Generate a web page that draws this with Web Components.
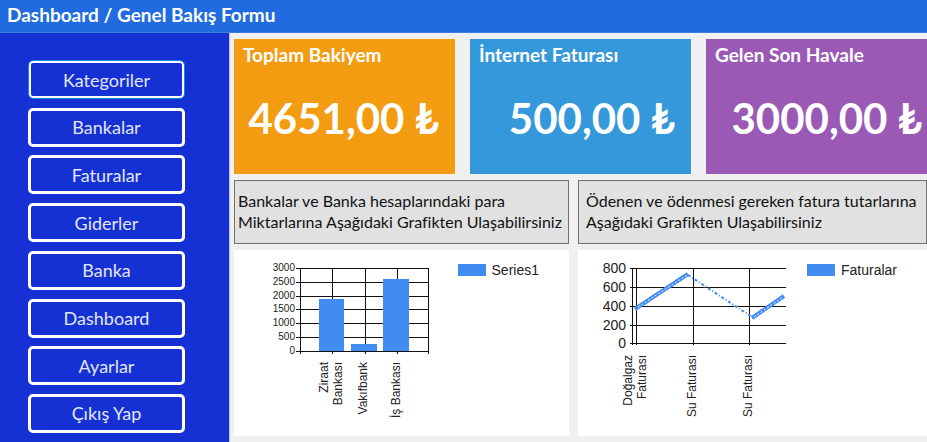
<!DOCTYPE html>
<html lang="tr">
<head>
<meta charset="utf-8">
<title>Dashboard / Genel Bakış Formu</title>
<style>
html, body { margin: 0; }
body { font-family: Lato, "Liberation Sans", sans-serif; background: #f0f0f0; }
</style>
</head>
<body>
<dashboard-app></dashboard-app>
<script>
function define(name, html, setup) {
  const template = document.createElement('template');
  template.innerHTML = html;
  customElements.define(name, class extends HTMLElement {
    constructor() {
      super();
      this.attachShadow({ mode: 'open' }).append(template.content.cloneNode(true));
    }
    connectedCallback() { if (setup) setup(this, this.shadowRoot); }
  });
}

define('menu-button', `
<style>
:host { display: block; }
button { display: block; width: 100%; height: 39px; padding: 0; background: #1531d4; color: #e2e6fb;
  border: 3px solid #fff; border-radius: 5px; font: inherit; font-size: 18px; line-height: 24px; cursor: pointer; }
:host([current]) button { border: 1px solid #0a8ae4; box-shadow: inset 0 0 0 2px #fff; }
</style>
<button type="button"><slot></slot></button>`);

define('side-menu', `
<style>
:host { display: block; background: #1531d4; border-right: 1px solid #b9bfe8; padding: 27px 44px 9px 28px; box-sizing: border-box; }
nav { height: 100%; display: flex; flex-direction: column; justify-content: space-between; gap: 8px; }
</style>
<nav><slot></slot></nav>`);

define('stat-card', `
<style>
:host { display: block; box-sizing: border-box; height: 135px; padding: 4px 16px 0 9px; color: #fff; white-space: nowrap; }
:host([tone=orange]) { background: #f39c12; }
:host([tone=blue]) { background: #3498db; }
:host([tone=purple]) { background: #9b59b6; }
:host([flush]) { padding-right: 5px; }
h2 { margin: 0; font-size: 19px; line-height: 24px; font-weight: 700; }
p { margin: 26px 0 0; font-size: 42px; line-height: 50px; font-weight: 700; text-align: right; }
</style>
<h2><slot name="label"></slot></h2>
<p><slot></slot></p>`);

define('info-note', `
<style>
:host { display: block; box-sizing: border-box; height: 64px; padding: 9px 3px; border: 1px solid #707070;
  background: #e1e1e1; color: #111; font-size: 16px; line-height: 21px; white-space: nowrap; }
:host([inset]) { padding-left: 7px; }
</style>
<slot></slot>`);

define('chart-panel', `
<style>
:host { display: flex; box-sizing: border-box; min-height: 186px; padding-right: 30px; background: #fff;
  font-family: "Liberation Sans", Arial, sans-serif; justify-content: space-between; }
figcaption { display: flex; align-items: center; gap: 6px; height: 20px; margin-top: 10px; font-size: 14px; line-height: 20px; color: #222; }
i { width: 28px; height: 12px; background: #418cf0; }
</style>
<slot></slot>
<figcaption><i></i><span></span></figcaption>`,
(host, root) => { root.querySelector('span').textContent = host.getAttribute('series'); });

const chartStyle = `
<style>
:host { display: block; flex: 0 1 212px; min-width: 0; }
svg { display: block; width: 100%; }
text { fill: #222; text-anchor: end; font-size: 12px; }
.small text { font-size: 10px; }
.large text { font-size: 14px; }
.grid { stroke: #111; stroke-width: 1; fill: none; shape-rendering: crispEdges; }
.bars { fill: #418cf0; }
.line { fill: none; stroke: #418cf0; }
</style>`;

const across = (x1, x2, ys) => ys.map(y => `M${x1} ${y}H${x2}`).join('');
const down = (y1, y2, xs) => xs.map(x => `M${x} ${y1}V${y2}`).join('');
const ticks = (x, ys, labels) => labels.map((t, i) => `<text x="${x}" y="${ys[i]}">${t}</text>`).join('');
const upright = (y, items) => items.map(([x, t]) => `<text transform="translate(${x} ${y}) rotate(-90)">${t}</text>`).join('');

define('bank-chart', chartStyle + `
<svg viewBox="0 0 212 186" role="img" aria-label="Banka bakiyeleri">
<path class="grid" d="${across(62, 195, [18, 32, 46, 59, 73, 87, 101])}${down(18, 104, [66, 98, 131, 163, 194])}"/>
<g class="bars"><rect x="85" y="49" width="25" height="52"/><rect x="117" y="94" width="26" height="7"/><rect x="149" y="29" width="26" height="72"/></g>
<g class="small">${ticks(61, [21, 35, 49, 62, 76, 90, 104], [3000, 2500, 2000, 1500, 1000, 500, 0])}</g>
${upright(112, [[94, 'Ziraat'], [108, 'Bankası'], [133, 'Vakıfbank'], [166, 'İş Bankası']])}
</svg>`);

define('bill-chart', chartStyle + `
<svg viewBox="0 0 212 186" role="img" aria-label="Fatura tutarları">
<path class="grid" d="${across(52, 208, [18, 37, 56, 75, 93])}${down(18, 95, [54, 58, 115, 171])}"/>
<g class="line">
<path stroke-width="4" d="M57 59L110 24M174 68L206 46"/>
<path stroke="#fff" stroke-width="1" stroke-dasharray="2 2" d="M60 57L109 25M176 67L205 47"/>
<path stroke-width="2" stroke-dasharray="3 2 1 2" d="M110 25L174 67"/>
</g>
<g class="large">${ticks(48, [23, 42, 61, 80, 98], [800, 600, 400, 200, 0])}</g>
${upright(105, [[54, 'Doğalgaz'], [68, 'Faturası'], [118, 'Su Faturası'], [174, 'Su Faturası']])}
</svg>`);

define('dashboard-app', `
<style>
:host { display: grid; grid-template: auto 1fr / 230px minmax(0, 1fr); min-height: 100vh; }
header { grid-column: 1 / -1; box-sizing: border-box; height: 33px; padding: 3px 7px; background: #1f6bdf; border-bottom: 1px solid #3a7de3; color: #fff; }
h1 { margin: 0; font-size: 19px; line-height: 24px; font-weight: 700; white-space: nowrap; }
main { padding: 6px 0 6px 4px; display: flex; flex-direction: column; gap: 6px; }
.cards { display: grid; grid-template-columns: repeat(3, minmax(0, 1fr)); gap: 15px; }
.pair { display: grid; grid-template-columns: minmax(0, 335fr) minmax(0, 349fr); gap: 9px; }
.charts { flex: 1; }
</style>
<header><h1>Dashboard / Genel Bakış Formu</h1></header>
<side-menu>
<menu-button current>Kategoriler</menu-button>
<menu-button>Bankalar</menu-button>
<menu-button>Faturalar</menu-button>
<menu-button>Giderler</menu-button>
<menu-button>Banka</menu-button>
<menu-button>Dashboard</menu-button>
<menu-button>Ayarlar</menu-button>
<menu-button>Çıkış Yap</menu-button>
</side-menu>
<main>
<section class="cards">
<stat-card tone="orange"><span slot="label">Toplam Bakiyem</span>4651,00 ₺</stat-card>
<stat-card tone="blue"><span slot="label">İnternet Faturası</span>500,00 ₺</stat-card>
<stat-card tone="purple" flush><span slot="label">Gelen Son Havale</span>3000,00 ₺</stat-card>
</section>
<section class="pair">
<info-note>Bankalar ve Banka hesaplarındaki para<br>Miktarlarına Aşağıdaki Grafikten Ulaşabilirsiniz</info-note>
<info-note inset>Ödenen ve ödenmesi gereken fatura tutarlarına<br>Aşağıdaki Grafikten Ulaşabilirsiniz</info-note>
</section>
<section class="pair charts">
<chart-panel series="Series1"><bank-chart></bank-chart></chart-panel>
<chart-panel series="Faturalar"><bill-chart></bill-chart></chart-panel>
</section>
</main>`);
</script>
</body>
</html>
